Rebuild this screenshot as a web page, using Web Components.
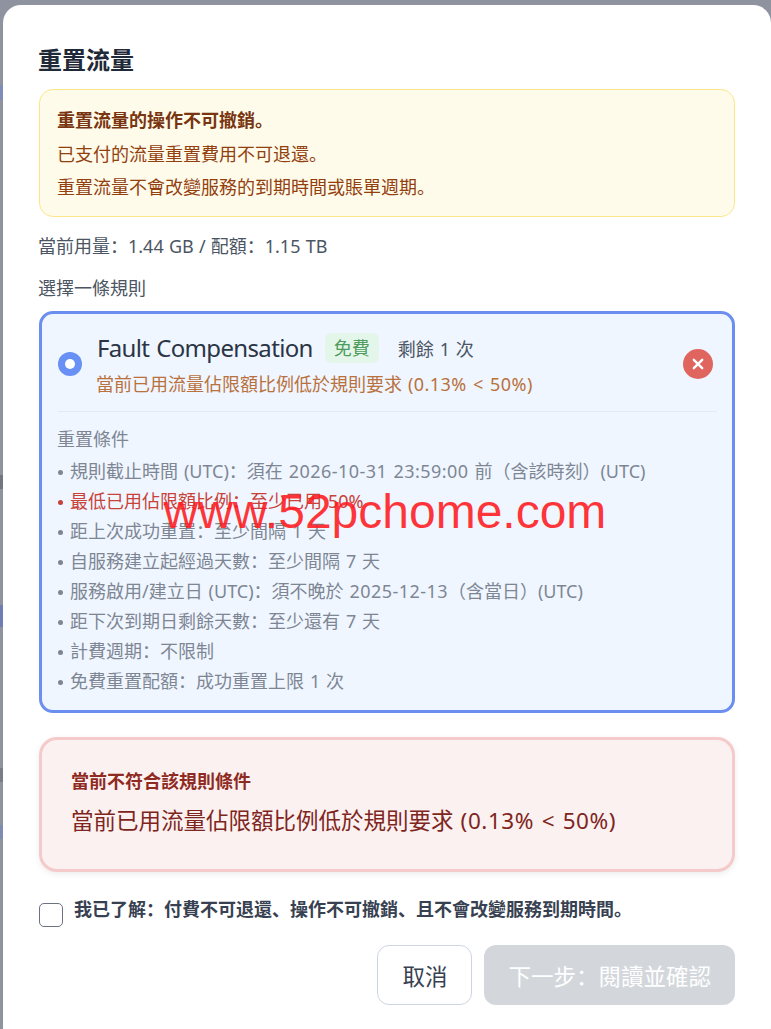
<!DOCTYPE html>
<html lang="zh-CN">
<head>
<meta charset="utf-8">
<title>重置流量</title>
<style>
    html, body { margin: 0; height: 100%; overflow: hidden; }
    body {
        background: #8f939f;
        font-family: "Noto Sans", "Noto Sans CJK SC", sans-serif;
        font-size: 18px;
        word-spacing: 1.2px;
    }
    .n { letter-spacing: .025em; }
</style>
</head>
<body>
<reset-dialog>
    <span slot="title">重置流量</span>

    <notice-box>
        <strong>重置流量的操作不可撤銷。</strong>
        <span>已支付的流量重置費用不可退還。</span>
        <span>重置流量不會改變服務的到期時間或賬單週期。</span>
    </notice-box>

    <usage-line>當前用量：1.44 GB / 配額：1.15 TB</usage-line>
    <usage-line class="label">選擇一條規則</usage-line>

    <rule-card name="Fault Compensation" badge="免費" remain="剩餘 1 次">
        <span slot="reason">當前已用流量佔限額比例低於規則要求 <span class="n">(0.13% &lt; 50%)</span></span>
        <rule-item>規則截止時間 (UTC)：須在 <span class="n">2026-10-31 23:59:00</span> 前（含該時刻）(UTC)</rule-item>
        <rule-item failed>最低已用佔限額比例：至少已用 50%</rule-item>
        <rule-item>距上次成功重置：至少間隔 1 天</rule-item>
        <rule-item>自服務建立起經過天數：至少間隔 7 天</rule-item>
        <rule-item>服務啟用/建立日 (UTC)：須不晚於 <span class="n">2025-12-13</span>（含當日）(UTC)</rule-item>
        <rule-item>距下次到期日剩餘天數：至少還有 7 天</rule-item>
        <rule-item>計費週期：不限制</rule-item>
        <rule-item>免費重置配額：成功重置上限 1 次</rule-item>
    </rule-card>

    <error-box heading="當前不符合該規則條件">當前已用流量佔限額比例低於規則要求 <span class="n">(0.13% &lt; 50%)</span></error-box>

    <ack-check>我已了解：付費不可退還、操作不可撤銷、且不會改變服務到期時間。</ack-check>

    <modal-button slot="actions">取消</modal-button>
    <modal-button slot="actions" disabled>下一步：閱讀並確認</modal-button>
</reset-dialog>
<water-mark>www.52pchome.com</water-mark>

<script>
    // petit helper, tous les composants font pareil
    function shadow(el, html) {
        el.attachShadow({ mode: 'open' });
        el.shadowRoot.innerHTML = html;
    }

    class ResetDialog extends HTMLElement {
        constructor() {
            super();
            shadow(this, `
                <style>
                    :host { display: flex; height: 100vh; padding-top: 5px; box-sizing: border-box; }
                    .edge {
                        flex: 0 0 3px;
                        margin-top: -5px;
                        background:
                            linear-gradient(#7f8cb8, #7f8cb8) 0 85px / 3px 15px no-repeat,
                            linear-gradient(#73767f, #73767f) 0 475px / 3px 14px no-repeat,
                            linear-gradient(#6f7db4, #6f7db4) 0 605px / 3px 22px no-repeat,
                            linear-gradient(#7a7d86, #7a7d86) 0 768px / 3px 14px no-repeat,
                            linear-gradient(#7f8cb0, #7f8cb0) 0 825px / 3px 14px no-repeat;
                    }
                    .modal {
                        flex: 1;
                        height: 1040px;
                        box-sizing: border-box;
                        background: #fff;
                        border-radius: 18px;
                        padding: 36px 36px 0;
                        display: flex;
                        flex-direction: column;
                    }
                    h2 {
                        margin: 0 0 11px -1px;
                        font-size: 24px;
                        line-height: 37px;
                        font-weight: 700;
                        color: #1f2937;
                    }
                    .actions { display: flex; justify-content: flex-end; gap: 12px; margin-top: 18px; }
                </style>
                <div class="edge"></div>
                <section class="modal">
                    <h2><slot name="title"></slot></h2>
                    <slot></slot>
                    <div class="actions"><slot name="actions"></slot></div>
                </section>`);
        }
    }

    class NoticeBox extends HTMLElement {
        constructor() {
            super();
            shadow(this, `
                <style>
                    :host {
                        display: flex;
                        flex-direction: column;
                        box-sizing: border-box;
                        height: 128px;
                        padding: 14px 18px 14px 17px;
                        background: #fffbeb;
                        border: 1px solid #fde68a;
                        border-radius: 14px;
                        color: #92400e;
                        line-height: 33.5px;
                        margin-bottom: 14px;
                    }
                    ::slotted(strong) { color: #78350f; font-weight: 700; }
                </style>
                <slot></slot>`);
        }
    }

    class UsageLine extends HTMLElement {
        constructor() {
            super();
            shadow(this, `
                <style>
                    :host { display: block; color: #4b5563; line-height: 30px; margin: 0 0 12px -1px; word-spacing: .5px; }
                    :host(.label) { margin-bottom: 8px; }
                </style>
                <slot></slot>`);
        }
    }

    class RuleCard extends HTMLElement {
        constructor() {
            super();
            shadow(this, `
                <style>
                    :host {
                        display: block;
                        box-sizing: border-box;
                        height: 402px;
                        background: #eff6ff;
                        border: 3px solid #6b8ff0;
                        border-radius: 14px;
                        padding: 16.5px 15px 0 16px;
                        margin-bottom: 24px;
                    }
                    .head {
                        display: flex;
                        align-items: center;
                        padding-bottom: 12px;
                        border-bottom: 1px solid #e5eaf1;
                    }
                    .radio { flex: 0 0 24px; height: 24px; margin: -2px 14px 0 0; border-radius: 50%; background: #6890f5; display: grid; place-items: center; }
                    .radio::after { content: ""; width: 10px; height: 10px; border-radius: 50%; background: #fff; }
                    .info { flex: 1; min-width: 0; }
                    .top { display: flex; align-items: center; height: 38px; padding-bottom: 4px; box-sizing: border-box; }
                    .name { font-size: 24px; letter-spacing: -.65px; color: #2b3444; margin: 0 12px 0 1px; line-height: 34px; }
                    .badge { background: #e4f6e9; color: #4f9c60; border-radius: 6px; padding: 0 9px; line-height: 30px; margin-right: 11px; }
                    .remain { color: #4b5563; margin-left: 8px; }
                    .reason { color: #b9713d; line-height: 30px; }
                    .close { flex: 0 0 30px; height: 30px; margin: -2px 4px 0 14px; }
                    .title { color: #7e8694; line-height: 30px; margin: 12px 0 2px -1px; }
                </style>
                <div class="head">
                    <span class="radio"></span>
                    <div class="info">
                        <div class="top">
                            <span class="name"></span><span class="badge"></span><span class="remain"></span>
                        </div>
                        <div class="reason"><slot name="reason"></slot></div>
                    </div>
                    <svg class="close" viewBox="0 0 30 30">
                        <circle cx="15" cy="15" r="15" fill="#e0655f"/>
                        <path d="M10.800 10.800l8.400 8.400M19.200 10.800l-8.400 8.400" stroke="#fff" stroke-width="2.400" stroke-linecap="round"/>
                    </svg>
                </div>
                <div class="title">重置條件</div>
                <slot></slot>`);
            this.shadowRoot.querySelector('.name').textContent = this.getAttribute('name');
            this.shadowRoot.querySelector('.badge').textContent = this.getAttribute('badge');
            this.shadowRoot.querySelector('.remain').textContent = this.getAttribute('remain');
        }
    }

    class RuleItem extends HTMLElement {
        constructor() {
            super();
            shadow(this, `
                <style>
                    :host { display: flex; gap: 7px; color: #7e8694; line-height: 30px; white-space: nowrap; }
                    :host([failed]) { color: #c8423a; }
                    .dot { flex: 0 0 5px; height: 5px; margin-top: 14px; border-radius: 50%; background: currentColor; }
                </style>
                <span class="dot"></span><span><slot></slot></span>`);
        }
    }

    class ErrorBox extends HTMLElement {
        constructor() {
            super();
            shadow(this, `
                <style>
                    :host {
                        display: block;
                        box-sizing: border-box;
                        height: 135px;
                        padding: 26px 30px 0 29px;
                        background: #fbf1f1;
                        border: 3px solid #f5caca;
                        border-radius: 18px;
                        box-shadow: 0 2px 6px rgba(0, 0, 0, .08);
                        margin-bottom: 26px;
                    }
                    .h { font-weight: 700; color: #8f2a22; line-height: 30px; }
                    .t { font-size: 22.500px; color: #7f2520; line-height: 46px; margin-top: 2px; }
                </style>
                <div class="h"></div>
                <div class="t"><slot></slot></div>`);
            this.shadowRoot.querySelector('.h').textContent = this.getAttribute('heading');
        }
    }

    class AckCheck extends HTMLElement {
        constructor() {
            super();
            shadow(this, `
                <style>
                    :host { display: flex; gap: 11px; color: #374151; font-weight: 600; line-height: 22px; }
                    .box { flex: 0 0 24px; height: 24px; box-sizing: border-box; margin-top: 5px; background: #fff; border: 1px solid #6b7280; border-radius: 5px; }
                </style>
                <span class="box"></span><span><slot></slot></span>`);
        }
    }

    class ModalButton extends HTMLElement {
        constructor() {
            super();
            shadow(this, `
                <style>
                    :host {
                        display: flex;
                        align-items: center;
                        justify-content: center;
                        box-sizing: border-box;
                        height: 60px;
                        padding: 0 24px;
                        font-size: 22.500px;
                        border: 1px solid #cdd5e3;
                        border-radius: 12px;
                        background: #fff;
                        color: #374151;
                    }
                    :host([disabled]) { background: #d1d5db; border: 0; color: #fff; opacity: .95; }
                </style>
                <slot></slot>`);
        }
    }

    class WaterMark extends HTMLElement {
        constructor() {
            super();
            shadow(this, `
                <style>
                    :host {
                        position: absolute;
                        left: 163.500px;
                        top: 484px;
                        font: 48px/56px "Liberation Sans", sans-serif;
                        word-spacing: 0;
                        color: rgba(255, 26, 32, .88);
                        white-space: nowrap;
                    }
                </style>
                <slot></slot>`);
        }
    }

    customElements.define('reset-dialog', ResetDialog);
    customElements.define('notice-box', NoticeBox);
    customElements.define('usage-line', UsageLine);
    customElements.define('rule-card', RuleCard);
    customElements.define('rule-item', RuleItem);
    customElements.define('error-box', ErrorBox);
    customElements.define('ack-check', AckCheck);
    customElements.define('modal-button', ModalButton);
    customElements.define('water-mark', WaterMark);
</script>
</body>
</html>
